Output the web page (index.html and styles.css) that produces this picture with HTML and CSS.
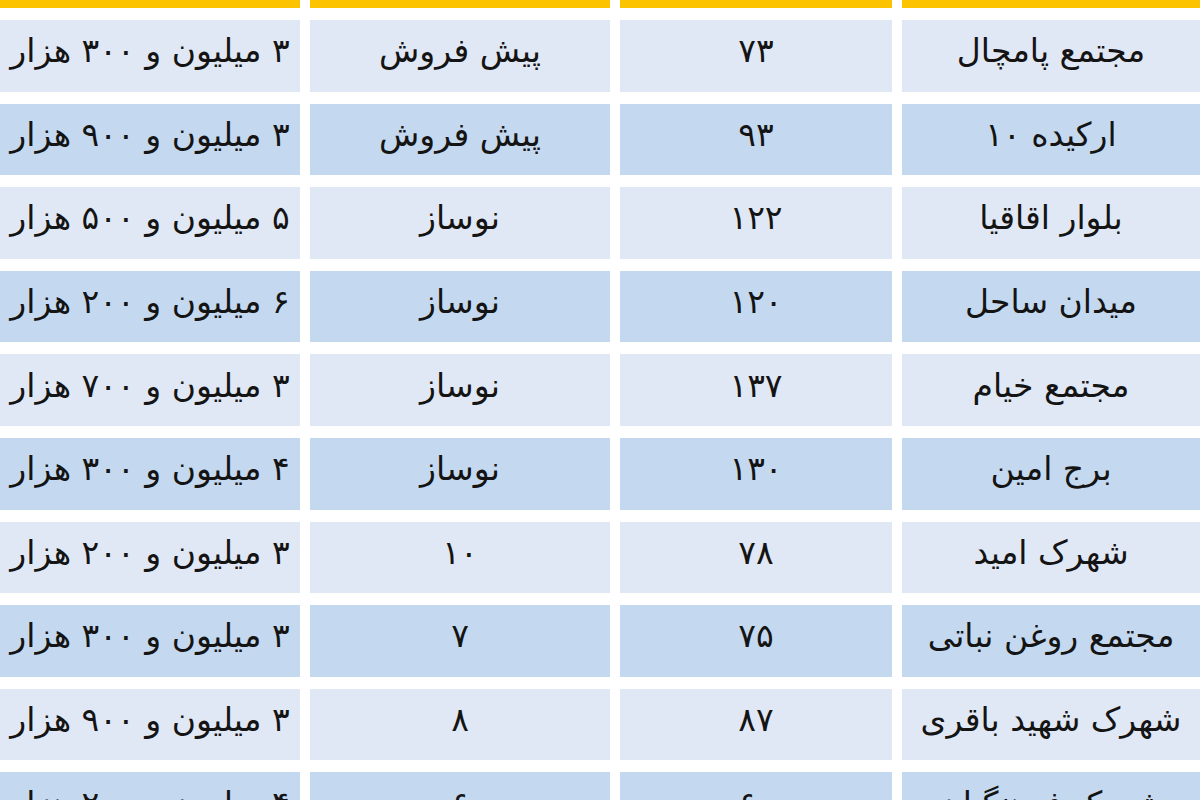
FILE: index.html
```html
<!DOCTYPE html>
<html lang="fa" dir="rtl">
<head>
<meta charset="utf-8">
<title>جدول قیمت</title>
<link rel="stylesheet" href="styles.css">
</head>
<body>
<div class="table">
  <div class="cell head"></div><div class="cell head"></div><div class="cell head"></div><div class="cell head"></div>

  <div class="cell light">مجتمع پامچال</div><div class="cell light">۷۳</div><div class="cell light">پیش فروش</div><div class="cell light">۳ میلیون و ۳۰۰ هزار</div>
  <div class="cell dark">ارکیده ۱۰</div><div class="cell dark">۹۳</div><div class="cell dark">پیش فروش</div><div class="cell dark">۳ میلیون و ۹۰۰ هزار</div>
  <div class="cell light">بلوار اقاقیا</div><div class="cell light">۱۲۲</div><div class="cell light">نوساز</div><div class="cell light">۵ میلیون و ۵۰۰ هزار</div>
  <div class="cell dark">میدان ساحل</div><div class="cell dark">۱۲۰</div><div class="cell dark">نوساز</div><div class="cell dark">۶ میلیون و ۲۰۰ هزار</div>
  <div class="cell light">مجتمع خیام</div><div class="cell light">۱۳۷</div><div class="cell light">نوساز</div><div class="cell light">۳ میلیون و ۷۰۰ هزار</div>
  <div class="cell dark">برج امین</div><div class="cell dark">۱۳۰</div><div class="cell dark">نوساز</div><div class="cell dark">۴ میلیون و ۳۰۰ هزار</div>
  <div class="cell light">شهرک امید</div><div class="cell light">۷۸</div><div class="cell light">۱۰</div><div class="cell light">۳ میلیون و ۲۰۰ هزار</div>
  <div class="cell dark">مجتمع روغن نباتی</div><div class="cell dark">۷۵</div><div class="cell dark">۷</div><div class="cell dark">۳ میلیون و ۳۰۰ هزار</div>
  <div class="cell light">شهرک شهید باقری</div><div class="cell light">۸۷</div><div class="cell light">۸</div><div class="cell light">۳ میلیون و ۹۰۰ هزار</div>
  <div class="cell dark">شهرک فرهنگیان</div><div class="cell dark">۶۰</div><div class="cell dark">۶</div><div class="cell dark">۴ میلیون و ۲۰۰ هزار</div>
</div>
</body>
</html>
```

FILE: styles.css
```css
html, body {
  margin: 0;
  padding: 0;
  background: #ffffff;
  overflow: hidden;
}

body {
  width: 1200px;
  height: 800px;
  font-family: "DejaVu Sans", sans-serif;
}

.table {
  display: grid;
  grid-template-columns: 298px 272px 300px 300px;
  grid-auto-rows: 71.6px;
  column-gap: 10px;
  row-gap: 12px;
  margin-top: -63.6px;
  width: 1200px;
}

.cell {
  box-sizing: border-box;
  display: flex;
  align-items: center;
  justify-content: center;
  padding-bottom: 10px;
  white-space: nowrap;
  font-size: 33px;
  line-height: 1;
  color: #141414;
  overflow: visible;
}

.head {
  background: #fcc400;
}

.light {
  background: #e1e8f5;
}

.dark {
  background: #c4d9f0;
}
```
